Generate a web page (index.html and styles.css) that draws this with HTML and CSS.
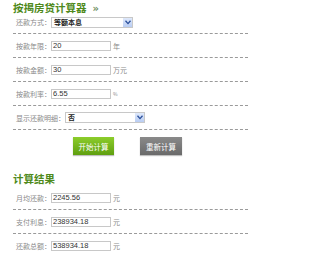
FILE: index.html
```html
<!DOCTYPE html>
<html lang="zh-CN">
<head>
<meta charset="utf-8">
<title>按揭房贷计算器</title>
<link rel="stylesheet" href="styles.css">
</head>
<body>
<div class="calc">
  <h2 class="title">按揭房贷计算器<span class="arrows">»</span></h2>
  <div class="row">
    <span class="label">还款方式：</span>
    <div class="select select-wide"><span class="sel-text">等额本息</span><span class="sel-btn"><svg width="6" height="5" viewBox="0 0 6 5"><path d="M0.5 0.8 L3 3.6 L5.5 0.8" fill="none" stroke="#2a4f9a" stroke-width="1.3"/></svg></span></div>
  </div>
  <div class="row">
    <span class="label">按款年限：</span>
    <input class="field" type="text" value="20" readonly>
    <span class="unit">年</span>
  </div>
  <div class="row">
    <span class="label">按款金额：</span>
    <input class="field" type="text" value="30" readonly>
    <span class="unit">万元</span>
  </div>
  <div class="row">
    <span class="label">按款利率：</span>
    <input class="field" type="text" value="6.55" readonly>
    <span class="unit unit-small">%</span>
  </div>
  <div class="row">
    <span class="label">显示还款明细：</span>
    <div class="select select-narrow"><span class="sel-text">否</span><span class="sel-btn"><svg width="6" height="5" viewBox="0 0 6 5"><path d="M0.5 0.8 L3 3.6 L5.5 0.8" fill="none" stroke="#2a4f9a" stroke-width="1.3"/></svg></span></div>
  </div>
  <div class="buttons">
    <button class="btn btn-green" type="button">开始计算</button>
    <button class="btn btn-gray" type="button">重新计算</button>
  </div>
  <h2 class="title title-result">计算结果</h2>
  <div class="row">
    <span class="label">月均还款：</span>
    <input class="field" type="text" value="2245.56" readonly>
    <span class="unit">元</span>
  </div>
  <div class="row">
    <span class="label">支付利息：</span>
    <input class="field" type="text" value="238934.18" readonly>
    <span class="unit">元</span>
  </div>
  <div class="row row-last">
    <span class="label">还款总额：</span>
    <input class="field" type="text" value="538934.18" readonly>
    <span class="unit">元</span>
  </div>
</div>
</body>
</html>
```

FILE: styles.css
```css
html, body {
  margin: 0;
  padding: 0;
  background: #ffffff;
}
body {
  font-family: "Noto Sans CJK SC", "Noto Sans", sans-serif;
  color: #333;
}
.calc {
  width: 235px;
  margin-left: 13px;
}
.title {
  margin: 0;
  height: 11px;
  font-size: 10.5px;
  line-height: 16px;
  font-weight: bold;
  color: #4f8a1c;
  white-space: nowrap;
}
.arrows {
  color: #6f8f5f;
  font-family: "DejaVu Sans", sans-serif;
  font-size: 10px;
  margin-left: 6px;
}
.title-result {
  height: 16px;
  line-height: 18px;
  margin-top: 15px;
}
.row {
  height: 23px;
  border-bottom: 1px dashed #9a9a9a;
  display: flex;
  align-items: center;
  padding-left: 3px;
}
.row:first-of-type {
  height: 22px;
}
.row-last {
  border-bottom: none;
}
.label {
  font-size: 7px;
  color: #8a8a8a;
  white-space: nowrap;
  line-height: 10px;
}
.field {
  box-sizing: border-box;
  width: 60px;
  height: 10px;
  margin: 0;
  padding: 0 1px;
  border: 1px solid #c8c8c8;
  background: #fff;
  font-family: "Liberation Sans", sans-serif;
  font-size: 7.5px;
  color: #333;
  outline: none;
}
.unit {
  font-size: 7px;
  color: #8a8a8a;
  margin-left: 2px;
}
.unit-small {
  font-size: 5px;
}
.select {
  box-sizing: border-box;
  height: 11px;
  border: 1px solid #c8c8c8;
  background: #fff;
  display: flex;
  align-items: center;
  justify-content: space-between;
}
.select-wide {
  width: 82px;
}
.select-narrow {
  width: 80px;
}
.sel-text {
  font-size: 7px;
  font-weight: bold;
  color: #222;
  padding-left: 2px;
  line-height: 9px;
}
.sel-btn {
  width: 9px;
  height: 9px;
  background: linear-gradient(#dfe9fb, #b9cdf3);
  display: flex;
  align-items: center;
  justify-content: center;
}
.sel-btn svg {
  display: block;
}
.buttons {
  display: flex;
  gap: 26px;
  padding-left: 60px;
  margin-top: 7px;
}
.btn {
  height: 18px;
  width: 42px;
  padding: 0;
  border: none;
  font-family: "Noto Sans CJK SC", sans-serif;
  font-size: 7.5px;
  color: #fff;
  box-shadow: 0 1px 1px rgba(0,0,0,0.25);
}
.btn-green {
  width: 41px;
  background: linear-gradient(#8ccd2c, #5f9f10);
}
.btn-gray {
  background: linear-gradient(#8a8a8a, #6a6a6a);
}
```
